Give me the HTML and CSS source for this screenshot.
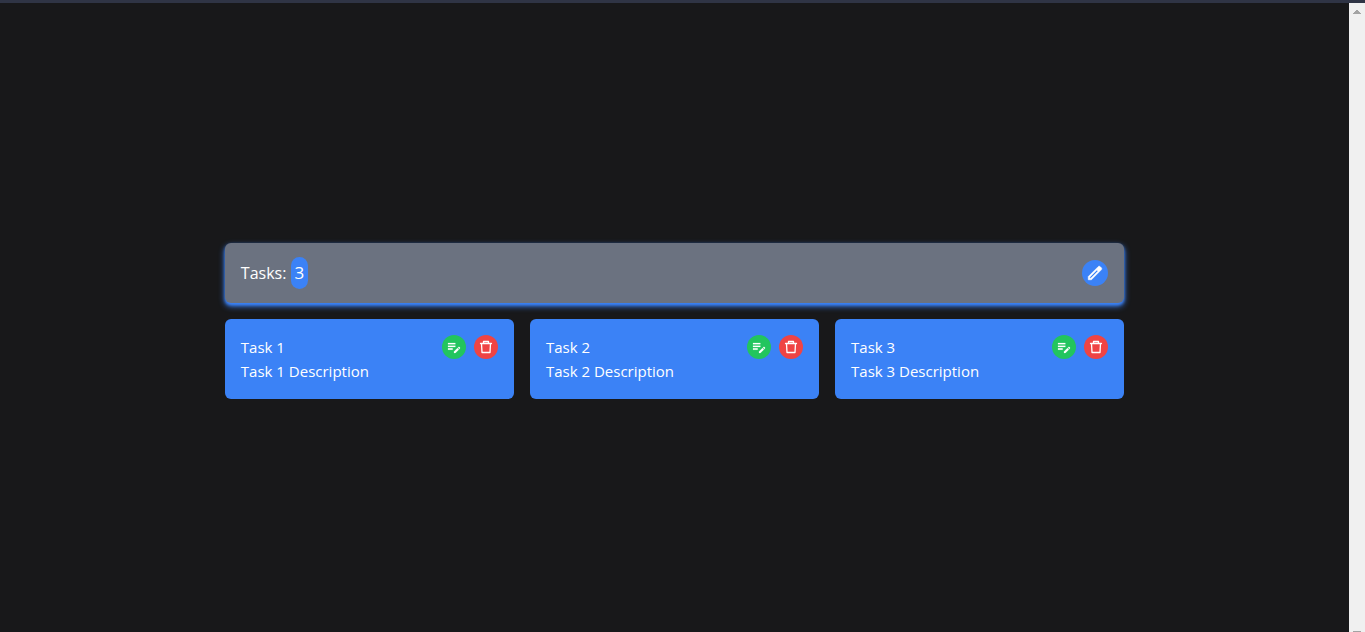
FILE: index.html
```html
<!DOCTYPE html>
<html lang="en">
<head>
<meta charset="utf-8">
<meta name="viewport" content="width=device-width, initial-scale=1">
<title>Tasks</title>
<link rel="stylesheet" href="styles.css">
</head>
<body>
<svg class="sprite" aria-hidden="true">
  <symbol id="pencil" viewBox="0 0 24 24"><path stroke="currentColor" stroke-width=".7" d="M5 19h1.425L16.2 9.225L14.775 7.8L5 17.575zm-2 2v-4.25L16.2 3.575q.3-.275.663-.425t.762-.15t.775.15t.65.45L20.425 5q.3.275.438.65T21 6.4q0 .4-.137.763t-.438.662L7.25 21zM19 6.4L17.6 5zm-3.525 2.125l-.7-.725L16.2 9.225z"/></symbol>
  <symbol id="edit-note" viewBox="0 0 24 24"><path stroke="currentColor" stroke-width=".3" d="M3 10h11v2H3zm0-2h11V6H3zm0 8h7v-2H3zm15.010-3.130.71-.71a.996.996 0 0 1 1.410 0l.71.71c.39.39.39 1.020 0 1.410l-.71.71zm-.71.71-5.300 5.300V21h2.120l5.300-5.300z"/></symbol>
  <symbol id="trash" viewBox="0 0 16 16"><path d="M2.500 4.500h11M5.500 4.500V2.500h5v2M3.500 4.500l.5 9h8l.5-9" fill="none" stroke="currentColor" stroke-linejoin="round" stroke-linecap="round" stroke-width="1.300"/></symbol>
</svg>
<div class="topline"></div>
<div class="viewport">
  <main class="page">
    <div class="board">
      <header class="summary">
        <h1 class="summary-title">Tasks: <span class="count">3</span></h1>
        <button class="round round-add" type="button" aria-label="Add task"><svg class="icon icon-large"><use href="#pencil"/></svg></button>
      </header>
      <section class="cards">
        <article class="card">
          <div class="card-head"><h2 class="card-title">Task 1</h2>
            <div class="actions">
              <button class="round round-edit" type="button" aria-label="Edit task 1"><svg class="icon"><use href="#edit-note"/></svg></button>
              <button class="round round-delete" type="button" aria-label="Delete task 1"><svg class="icon"><use href="#trash"/></svg></button>
            </div>
          </div>
          <p class="card-text">Task 1 Description</p>
        </article>
        <article class="card">
          <div class="card-head"><h2 class="card-title">Task 2</h2>
            <div class="actions">
              <button class="round round-edit" type="button" aria-label="Edit task 2"><svg class="icon"><use href="#edit-note"/></svg></button>
              <button class="round round-delete" type="button" aria-label="Delete task 2"><svg class="icon"><use href="#trash"/></svg></button>
            </div>
          </div>
          <p class="card-text">Task 2 Description</p>
        </article>
        <article class="card">
          <div class="card-head"><h2 class="card-title">Task 3</h2>
            <div class="actions">
              <button class="round round-edit" type="button" aria-label="Edit task 3"><svg class="icon"><use href="#edit-note"/></svg></button>
              <button class="round round-delete" type="button" aria-label="Delete task 3"><svg class="icon"><use href="#trash"/></svg></button>
            </div>
          </div>
          <p class="card-text">Task 3 Description</p>
        </article>
      </section>
    </div>
  </main>
  <div class="scrollbar" aria-hidden="true">
    <svg class="arrow" viewBox="0 0 8 4"><path d="M0 4V3h1V2h1V1h1V0h2v1h1v1h1v1h1v1z"/></svg>
    <div class="thumb"></div>
  </div>
</div>
</body>
</html>
```
FILE: styles.css
```css
* { box-sizing: border-box; margin: 0; }
body {
  display: flex;
  flex-direction: column;
  min-height: 100vh;
  background: #18181a;
  color: #fff;
  font: 15px/24px "Segoe UI", "Open Sans", "Noto Sans", sans-serif;
}
.sprite { position: absolute; width: 0; height: 0; }
.topline { height: 3px; background: #2f3445; }
.viewport { flex: 1; display: flex; }
.page {
  flex: 1;
  display: flex;
  align-items: center;
  justify-content: center;
  padding-top: 7px;
}
.board { width: 66.667%; display: grid; gap: 16px; }
.summary {
  display: flex;
  align-items: center;
  justify-content: space-between;
  height: 60px;
  padding: 0 16px;
  border-radius: 6px;
  background: #6b7280;
  box-shadow: 0 3px 6px #3b82f6, 0 2px 3px #3b82f6;
}
.summary-title { font-size: 16px; line-height: 28px; font-weight: 400; }
.count {
  display: inline-block;
  padding: 2px 4px;
  border-radius: 9px;
  background: #3b82f6;
  font-size: 17px;
}
.cards { display: grid; grid-template-columns: repeat(3, 1fr); gap: 16px; }
.card { padding: 16px; border-radius: 6px; background: #3b82f6; }
.card-head { display: flex; align-items: center; justify-content: space-between; }
.card-title { font-size: 15px; line-height: 24px; font-weight: 400; }
.actions { display: flex; gap: 8px; }
.round {
  display: grid;
  place-items: center;
  width: 24px;
  height: 24px;
  padding: 0;
  border: 0;
  border-radius: 50%;
  color: #fff;
  cursor: pointer;
}
.round-add { width: 26px; height: 26px; background: #3b82f6; }
.round-edit { background: #22c55e; }
.round-delete { background: #ef4444; }
.icon { width: 16px; height: 16px; fill: currentColor; }
.icon-large { width: 18px; height: 18px; }
.scrollbar {
  display: flex;
  flex-direction: column;
  align-items: center;
  justify-content: space-between;
  width: 16px;
  padding-top: 7px;
  background: #f0f0f0;
}
.arrow { width: 8px; height: 4px; fill: #a3a3a3; }
.thumb { width: 8px; height: 1px; background: #a3a3a3; }
```
